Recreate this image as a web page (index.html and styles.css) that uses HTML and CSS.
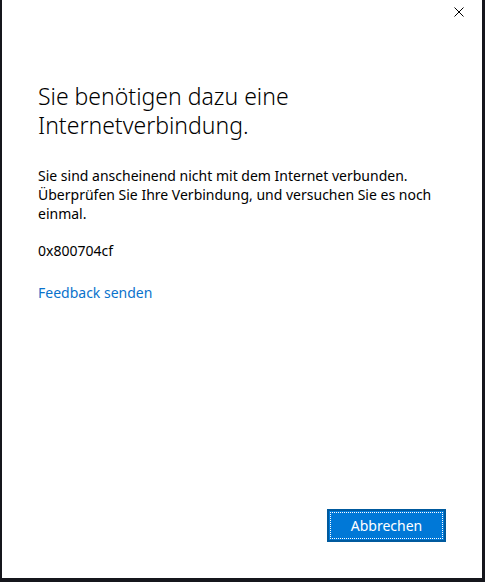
FILE: index.html
```html
<!DOCTYPE html>
<html lang="de">
<head>
<meta charset="utf-8">
<link rel="stylesheet" href="styles.css">
</head>
<body>
<div class="window">
  <div class="titlebar">
    <button class="close" aria-label="Schließen">
      <svg width="10" height="10" viewBox="0 0 10 10"><path d="M0.5 0.5 L9.5 9.5 M9.5 0.5 L0.5 9.5" stroke="#000" stroke-width="1" fill="none"/></svg>
    </button>
  </div>
  <div class="content">
    <h1 class="title">Sie benötigen dazu eine Internetverbindung.</h1>
    <p class="message">Sie sind anscheinend nicht mit dem Internet verbunden. Überprüfen Sie Ihre Verbindung, und versuchen Sie es noch einmal.</p>
    <p class="code">0x800704cf</p>
    <a class="link" href="#">Feedback senden</a>
  </div>
  <div class="footer">
    <button class="btn"><span class="btn-inner">Abbrechen</span></button>
  </div>
</div>
</body>
</html>
```
FILE: styles.css
```css
html, body {
  margin: 0;
  padding: 0;
  background: #15161c;
  width: 485px;
  height: 582px;
  overflow: hidden;
}
.window {
  margin-left: 2px;
  width: 480px;
  height: 578px;
  background: #fff;
  display: flex;
  flex-direction: column;
  font-family: "Noto Sans", "Open Sans", sans-serif;
  color: #000;
}
.titlebar {
  height: 24px;
  display: flex;
  justify-content: flex-end;
}
.close {
  width: 46px;
  height: 24px;
  border: 0;
  background: transparent;
  padding: 0;
  display: flex;
  align-items: center;
  justify-content: center;
  margin-right: 0;
}
.content {
  padding: 58px 36px 0 36px;
  flex: 1;
}
.title {
  margin: 0;
  font-size: 23px;
  font-weight: 300;
  line-height: 29px;
  width: 300px;
}
.message {
  margin: 26px 0 0 0;
  font-size: 14px;
  line-height: 19px;
  width: 420px;
}
.code {
  margin: 18px 0 0 0;
  font-size: 14px;
  line-height: 20px;
}
.link {
  display: inline-block;
  margin-top: 22px;
  font-size: 14px;
  line-height: 20px;
  color: #0a72cc;
  text-decoration: none;
}
.footer {
  display: flex;
  justify-content: flex-end;
  padding: 0 36px 36px 0;
}
.btn {
  width: 119px;
  height: 33px;
  padding: 1px;
  border: 2px solid #005a9e;
  background: #0078d7;
  font-family: "Noto Sans", "Open Sans", sans-serif;
  font-size: 14px;
  color: #fff;
  box-sizing: border-box;
}
.btn-inner {
  display: flex;
  align-items: center;
  justify-content: center;
  height: 100%;
  border: 1px dotted #fff;
  box-sizing: border-box;
}
```
